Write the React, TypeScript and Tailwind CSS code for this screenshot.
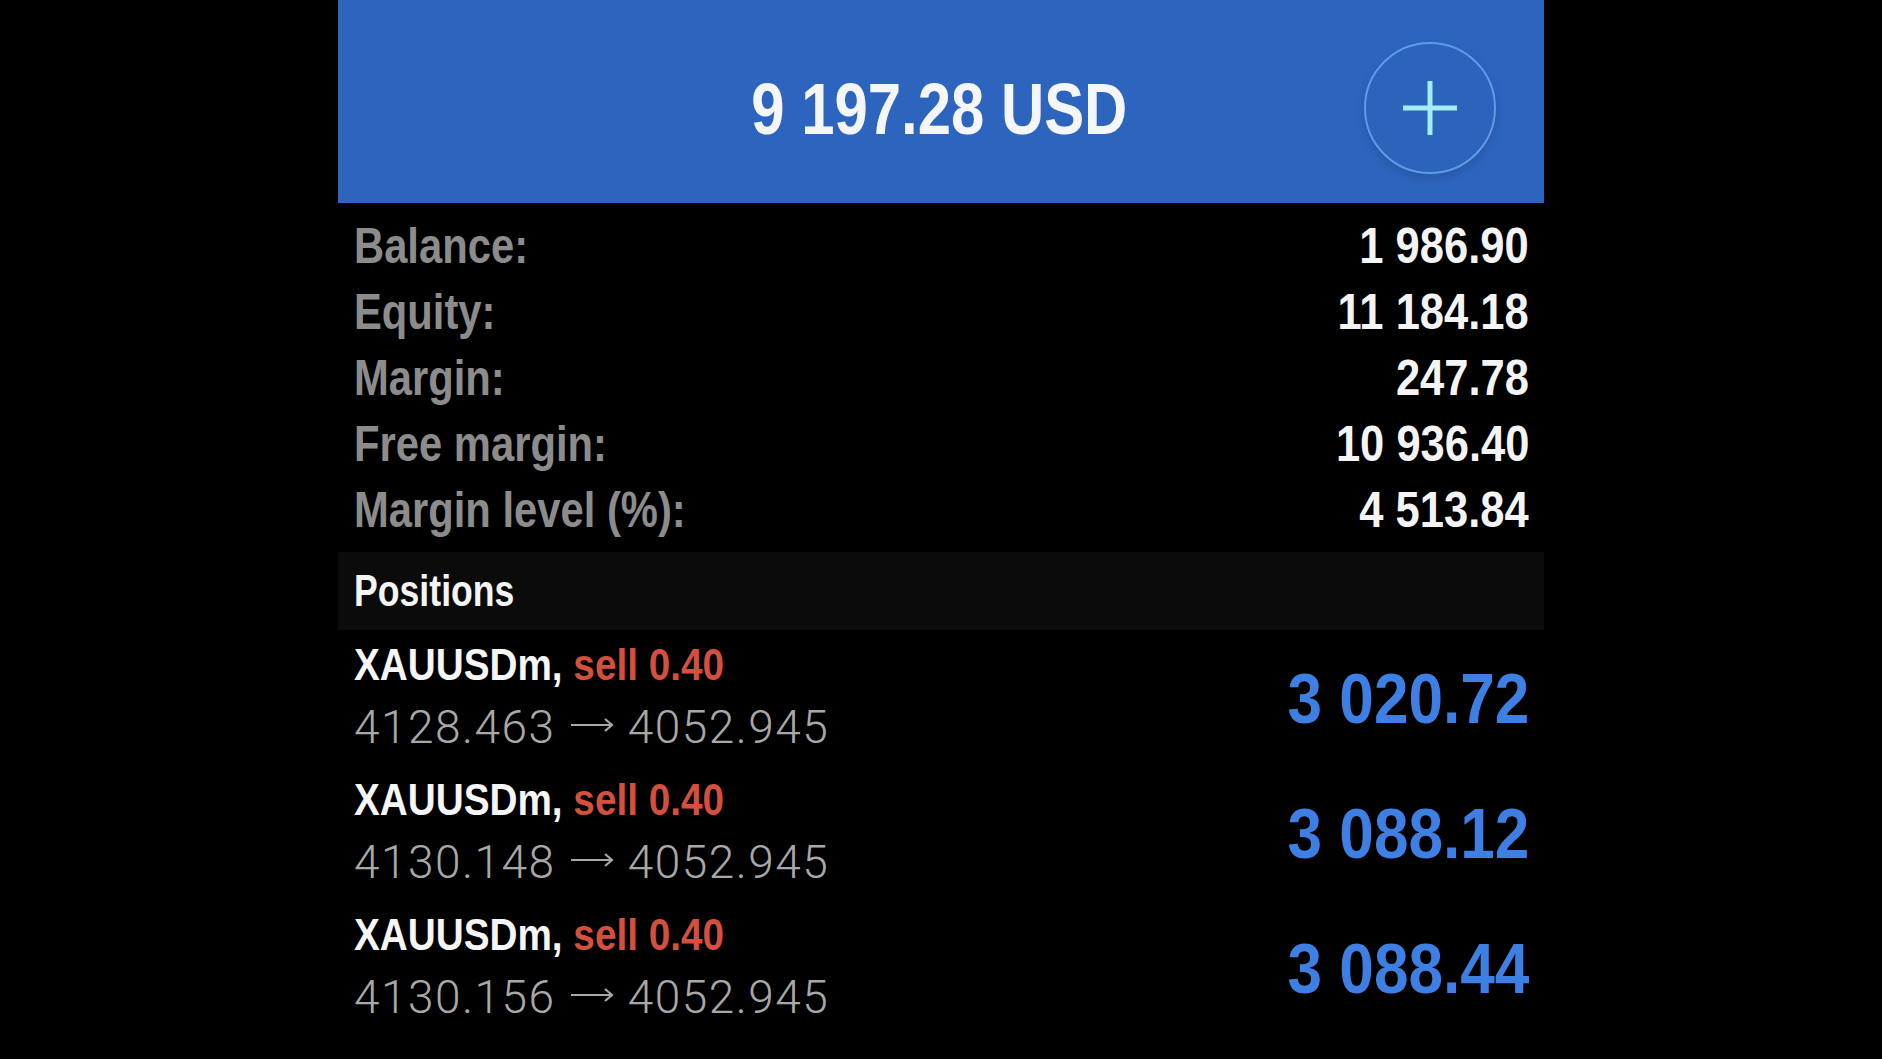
type Row = { label: string; value: string };

type Position = {
    symbol: string;
    side: string;
    open: string;
    current: string;
    profit: string;
};

const rows: Row[] = [
    { label: 'Balance:', value: '1 986.90' },
    { label: 'Equity:', value: '11 184.18' },
    { label: 'Margin:', value: '247.78' },
    { label: 'Free margin:', value: '10 936.40' },
    { label: 'Margin level (%):', value: '4 513.84' },
];

const positions: Position[] = [
    { symbol: 'XAUUSDm,', side: 'sell 0.40', open: '4128.463', current: '4052.945', profit: '3 020.72' },
    { symbol: 'XAUUSDm,', side: 'sell 0.40', open: '4130.148', current: '4052.945', profit: '3 088.12' },
    { symbol: 'XAUUSDm,', side: 'sell 0.40', open: '4130.156', current: '4052.945', profit: '3 088.44' },
];

const PlusIcon = () => (
    <svg width="56" height="56" viewBox="0 0 56 56" fill="none">
        <path d="M28 1v54M1 28h54" stroke="#a3ecf8" strokeWidth="5" />
    </svg>
);

export default function App() {
    return (
        <div className="flex min-h-screen justify-center bg-black font-['Liberation_Sans',Arial,sans-serif]">
            <div className="w-[1206px]">
                <header className="grid h-[203px] grid-cols-[1fr_auto_1fr] items-center bg-[#2d64bd] pt-[13px]">
                    <div />
                    <h1 className="-ml-[3px] inline-block origin-center scale-x-[0.82] text-[73px] font-bold leading-none text-[#f4f6fa]">
                        9 197.28 USD
                    </h1>
                    <div className="flex justify-end pr-[48px]">
                        <button className="flex h-[132px] w-[132px] items-center justify-center rounded-full border-2 border-[#5d9ce8] bg-[#2c63bb] shadow-[0_4px_10px_rgba(0,0,0,0.12)]">
                            <PlusIcon />
                        </button>
                    </div>
                </header>

                <section className="pt-[10px] pr-[15px] pl-[16px]">
                    {rows.map((row) => (
                        <div key={row.label} className="flex h-[66px] items-center justify-between text-[50px] font-bold leading-[66px]">
                            <span className="inline-block origin-left scale-x-[0.835] whitespace-nowrap text-[#8c8c8c]">
                                {row.label}
                            </span>
                            <span className="inline-block origin-right scale-x-[0.87] whitespace-nowrap text-[#f4f4f4]">
                                {row.value}
                            </span>
                        </div>
                    ))}
                </section>

                <div className="mt-[9px] flex h-[78px] items-center bg-[#0b0b0b] pl-[16px]">
                    <span className="inline-block origin-left scale-x-[0.81] text-[44px] font-bold leading-[78px] text-[#f4f4f4]">
                        Positions
                    </span>
                </div>

                <ul>
                    {positions.map((p) => (
                        <li key={p.open} className="flex h-[135px] justify-between pt-[1px] pr-[15px] pl-[16px]">
                            <div>
                                <div className="h-[67px] whitespace-nowrap text-[45px] font-bold leading-[67px]">
                                    <span className="inline-block origin-left scale-x-[0.86]">
                                        <span className="text-[#f6f6f6]">{p.symbol}</span>{' '}
                                        <span className="text-[#d4503d]">{p.side}</span>
                                    </span>
                                </div>
                                <div className="-mt-[5px] flex h-[68px] items-center gap-[14px] whitespace-nowrap font-['Roboto',sans-serif] text-[46px] font-light leading-[68px] tracking-[1.5px] text-[#a8a8a8]">
                                    <span>{p.open}</span>
                                    <svg width="44" height="16" viewBox="0 0 44 16" fill="none" className="-mt-[4px]">
                                        <path d="M1 8h41M35 2l7 6-7 6" stroke="#a8a8a8" strokeWidth="2.2" />
                                    </svg>
                                    <span>{p.current}</span>
                                </div>
                            </div>
                            <span className="inline-block origin-right scale-x-[0.875] self-center whitespace-nowrap text-[71px] font-bold leading-none text-[#3d7fe3]">
                                {p.profit}
                            </span>
                        </li>
                    ))}
                </ul>
            </div>
        </div>
    );
}
